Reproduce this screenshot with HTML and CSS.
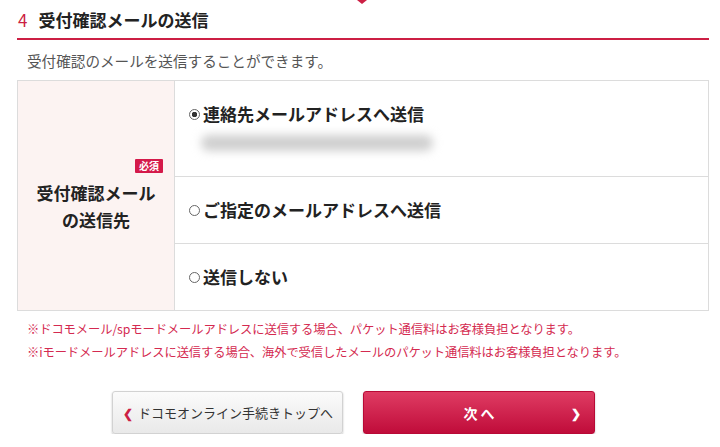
FILE: index.html
```html
<!DOCTYPE html>
<html lang="ja">
  <head>
    <meta charset="utf-8" />
    <meta name="viewport" content="width=device-width, initial-scale=1" />
    <link rel="stylesheet" href="styles.css">
  </head>
  <body>
    <div class="step-arrow"></div>
    <div class="section">
      <h2 class="heading"><span class="num">4</span>受付確認メールの送信</h2>
      <p class="lead">受付確認のメールを送信することができます。</p>

      <div class="form-table">
        <div class="label-cell">
          <span class="badge">必須</span>
          <div class="label">受付確認メール<br />の送信先</div>
        </div>
        <div class="options">
          <div class="option first">
            <div class="opt-text"><span class="radio checked"></span>連絡先メールアドレスへ送信</div>
            <!-- address is masked in the capture -->
            <div class="masked"></div>
          </div>
          <div class="option">
            <div class="opt-text"><span class="radio"></span>ご指定のメールアドレスへ送信</div>
          </div>
          <div class="option">
            <div class="opt-text"><span class="radio"></span>送信しない</div>
          </div>
        </div>
      </div>

      <div class="notes">
        <p>※ドコモメール/spモードメールアドレスに送信する場合、パケット通信料はお客様負担となります。</p>
        <p>※iモードメールアドレスに送信する場合、海外で受信したメールのパケット通信料はお客様負担となります。</p>
      </div>

      <div class="buttons">
        <a href="#" class="btn btn-back"><span class="chev">&#10094;</span>ドコモオンライン手続きトップへ</a>
        <a href="#" class="btn btn-next">次 へ<span class="chev">&#10095;</span></a>
      </div>
    </div>
  </body>
</html>
```

FILE: styles.css
```css
body {
  margin: 0;
  background: #ffffff;
  font-family: "Noto Sans CJK JP", "Noto Sans", sans-serif;
  color: #222;
}

.step-arrow {
  position: absolute;
  top: 0;
  left: 357px;
  width: 0;
  height: 0;
  border-left: 5px solid transparent;
  border-right: 5px solid transparent;
  border-top: 4px solid #cc1f44;
}

.section {
  padding: 0 11px 0 17px;
}

.heading {
  display: flex;
  align-items: center;
  height: 38px;
  margin: 0;
  font-size: 17px;
  font-weight: bold;
  border-bottom: 2px solid #cc1f44;
}

.num {
  color: #cc1f44;
  font-weight: normal;
  font-size: 17px;
  margin: 0 11px 0 1px;
}

.lead {
  margin: 0;
  height: 40px;
  box-sizing: border-box;
  padding: 11px 0 0 10px;
  font-size: 14.6px;
  line-height: 20px;
  color: #555;
}

.form-table {
  display: flex;
  border: 1px solid #dcdcdc;
}

.label-cell {
  width: 156px;
  background: #fcf3f2;
  border-right: 1px solid #dcdcdc;
  display: flex;
  flex-direction: column;
  justify-content: center;
}

.badge {
  align-self: flex-end;
  margin-right: 11px;
  background: #d4194a;
  color: #fff;
  font-size: 10px;
  font-weight: bold;
  line-height: 14px;
  padding: 0 4px;
  border-radius: 1px;
}

.label {
  text-align: center;
  font-size: 17px;
  font-weight: bold;
  line-height: 27px;
  margin-top: 6px;
}

.options {
  flex: 1;
  display: flex;
  flex-direction: column;
}

.option {
  height: 66px;
  display: flex;
  flex-direction: column;
  justify-content: center;
  padding-left: 14px;
  border-top: 1px solid #dcdcdc;
}

.option.first {
  height: 95px;
  border-top: none;
  padding-bottom: 4px;
  box-sizing: border-box;
}

.opt-text {
  display: flex;
  align-items: center;
  font-size: 17px;
  font-weight: bold;
  line-height: 24px;
}

.radio {
  box-sizing: border-box;
  width: 11px;
  height: 11px;
  margin-right: 3px;
  border: 1px solid #666;
  border-radius: 50%;
  background: #fff;
}

.radio.checked {
  background: radial-gradient(circle, #333 0, #333 2.5px, #fff 3px);
}

.masked {
  width: 232px;
  height: 16px;
  margin: 9px 0 0 12px;
  background: #cfcfcf;
  border-radius: 8px;
  filter: blur(5px);
}

.notes {
  padding: 7px 0 0 10px;
}

.notes p {
  margin: 0;
  font-size: 12.3px;
  line-height: 23px;
  color: #d42a50;
  letter-spacing: -0.1px;
}

.buttons {
  display: flex;
  gap: 20px;
  padding: 27px 0 0 95px;
}

.btn {
  box-sizing: border-box;
  height: 43px;
  display: flex;
  align-items: center;
  border-radius: 3px;
  text-decoration: none;
  box-shadow: 0 1px 2px rgba(0, 0, 0, 0.25);
}

.btn-back {
  width: 231px;
  padding-left: 10px;
  background: linear-gradient(#fbfbfb, #e9e9e9);
  border: 1px solid #d2d2d2;
  color: #333;
  font-size: 13px;
}

.btn-back .chev {
  color: #cc1f44;
  font-size: 12px;
  font-weight: bold;
  margin-right: 5px;
}

.btn-next {
  width: 232px;
  position: relative;
  justify-content: center;
  background: linear-gradient(#df3c63, #c00c3a);
  border: 1px solid #b80a36;
  color: #fff;
  font-size: 14px;
  font-weight: bold;
}

.btn-next .chev {
  position: absolute;
  right: 13px;
  top: 12px;
  font-size: 12px;
}
```
